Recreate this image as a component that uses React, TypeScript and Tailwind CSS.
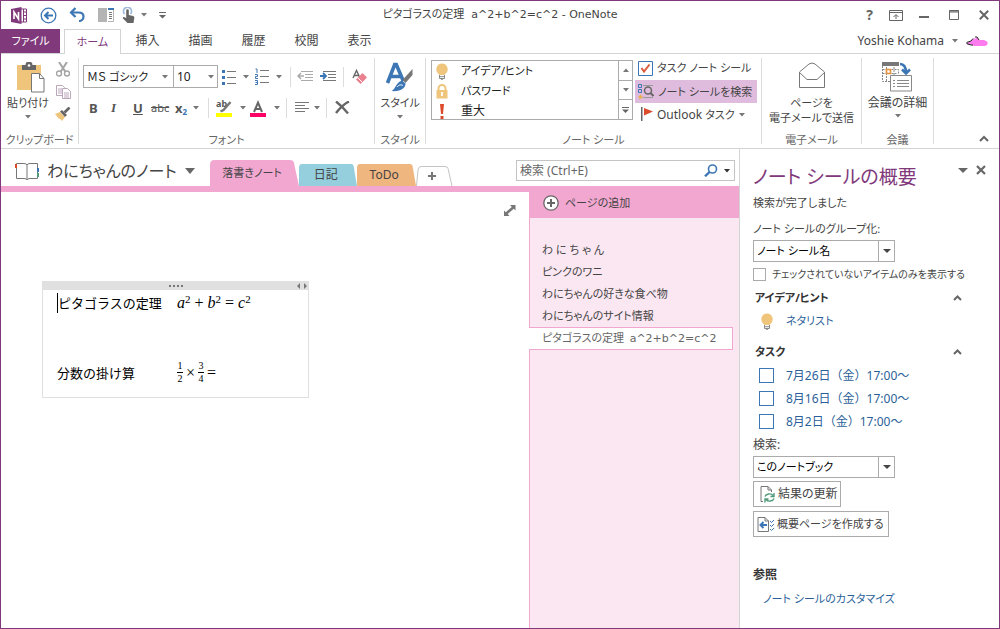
import type { ReactNode } from "react";

const menuTabs = ["挿入", "描画", "履歴", "校閲", "表示"];
const pages = ["わ に ち ゃ ん", "ピンクのワニ", "わにちゃんの好きな食べ物", "わにちゃんのサイト情報"];
const tasks = ["7月26日（金）17:00～", "8月16日（金）17:00～", "8月2日（金）17:00～"];

function Caret({ className = "text-[#777]" }: { className?: string }) {
    return (
        <svg width="6" height="4" viewBox="0 0 6 4" className={`shrink-0 ${className}`}>
            <path d="M0 0h6L3 3.5z" fill="currentColor" />
        </svg>
    );
}

function Sep() {
    return <span className="h-5 w-px shrink-0 bg-[#dcdcdc]" />;
}

function Bulb() {
    return (
        <svg width="14" height="17" viewBox="0 0 14 17" className="shrink-0">
            <path d="M7 0.5a5.8 5.8 0 0 0-3.4 10.4L4.5 12h5l.9-1.1A5.8 5.8 0 0 0 7 .5z" fill="#efc57c" />
            <path d="M4.5 12v3.5h5V12M4.5 13.7h5M6 16.3h2" stroke="#8a8a8a" fill="none" />
        </svg>
    );
}

function Group({ label, className, children }: { label: string; className: string; children: ReactNode }) {
    return (
        <section className={`mb-1 flex shrink-0 flex-col border-r border-[#dcdcdc] ${className}`}>
            <div className="min-h-0 flex-1">{children}</div>
            <div className="-mb-1 text-center text-[11px]/4 text-[#666]">{label}</div>
        </section>
    );
}

function TitleBar() {
    return (
        <header className="flex h-7 items-center pr-2.5 pl-2.5">
            <div className="flex flex-1 items-center">
                <svg width="17" height="17" viewBox="0 0 17 17">
                    <path d="M9 2h6.500v13H9" fill="#fff" stroke="#80397b" />
                    <path d="M12.5 2v13M13 5h3M13 8.5h3M13 12h3" stroke="#80397b" fill="none" />
                    <path d="M0 2l10.5-2v17L0 15z" fill="#80397b" />
                    <path d="M3 12V5l4.5 7V5" stroke="#fff" strokeWidth="1.6" fill="none" />
                </svg>
                <button aria-label="戻る" className="ml-3">
                    <svg width="17" height="17" viewBox="0 0 17 17" fill="none" stroke="#3c76b4">
                        <circle cx="8.5" cy="8.5" r="7.3" strokeWidth="1.3" />
                        <path d="M13 8.5H5M8.5 5L5 8.5 8.5 12" strokeWidth="2" />
                    </svg>
                </button>
                <button aria-label="元に戻す" className="ml-3">
                    <svg width="17" height="16" viewBox="0 0 17 16" fill="none" stroke="#3c76b4" strokeWidth="2.2">
                        <path d="M6.5 1L2 5.5 6.5 10" />
                        <path d="M2 5.5h7.5c3 0 5 1.5 5 4s-2 4.5-4.5 4.5" />
                    </svg>
                </button>
                <button aria-label="デスクトップに固定" className="ml-3">
                    <svg width="16" height="14" viewBox="0 0 16 14">
                        <path d="M0 0h9v14H0z" fill="#b4b4b4" />
                        <path d="M10 .5h5.5v13H10" fill="#fff" stroke="#b4b4b4" />
                        <path d="M10 0h6v2h-6z" fill="#3c76b4" />
                        <path d="M11 4.5h3M11 6.5h3M11 8.5h3M11 10.5h3" stroke="#777" />
                    </svg>
                </button>
                <button aria-label="タッチ" className="ml-2 flex items-center gap-1.5">
                    <svg width="13" height="17" viewBox="0 0 13 17">
                        <path d="M2.5 7A4 4 0 1 1 8.5 7" fill="none" stroke="#9ebbd9" strokeWidth="1.8" />
                        <path d="M4.2 3.5a1.3 1.3 0 0 1 2.6 0V8l4.2 1c1 .3 1.5 1 1.3 2L11.5 16h-6L1 11.5c-.6-1 .4-1.9 1.4-1.3L4.2 11z" fill="#666" />
                    </svg>
                    <Caret />
                </button>
                <button aria-label="クイック アクセス" className="ml-3">
                    <svg width="7" height="7" viewBox="0 0 7 7" fill="#666">
                        <path d="M0 0h7v1H0zM0 3h7L3.5 6.5z" />
                    </svg>
                </button>
            </div>
            <h1 className="font-['DejaVu_Sans','Noto_Sans_CJK_JP',sans-serif] text-[11px]/4 text-[#444]">ピタゴラスの定理&nbsp; a^2+b^2=c^2 - OneNote</h1>
            <div className="flex flex-1 items-center justify-end text-[#666]">
                <button aria-label="ヘルプ" className="text-[14px]/4 font-bold">?</button>
                <button aria-label="リボンの表示" className="ml-4">
                    <svg width="14" height="11" viewBox="0 0 14 11" fill="none" stroke="currentColor">
                        <path d="M.5.5h13v10H.5zM.5 2.5h13M7 9V5M4.5 7L7 4.5 9.5 7" />
                    </svg>
                </button>
                <button aria-label="最小化" className="ml-4">
                    <svg width="10" height="10"><path d="M0 6h10v2H0z" fill="currentColor" /></svg>
                </button>
                <button aria-label="最大化" className="ml-5">
                    <svg width="10" height="10" fill="none" stroke="currentColor"><path d="M.5.5h9v9h-9zM0 2h10M0 1h10" /></svg>
                </button>
                <button aria-label="閉じる" className="ml-5">
                    <svg width="10" height="10" stroke="currentColor" strokeWidth="2"><path d="M.8.8l8.4 8.4M9.2.8L.8 9.2" /></svg>
                </button>
            </div>
        </header>
    );
}

function TabRow() {
    return (
        <nav className="flex h-[25px] items-stretch border-b border-[#d4d4d4] text-[12px]/4 text-[#444]">
            <button className="w-[59px] bg-[#80397b] text-[11px]/4 text-white">ファイル</button>
            <button className="-mb-px ml-1 w-[57px] border border-b-0 border-[#d4d4d4] bg-white text-[11px]/4 text-[#80397b]">ホーム</button>
            {menuTabs.map((t) => (
                <button key={t} className="w-[53px]">{t}</button>
            ))}
            <button className="ml-auto flex items-center gap-2 pr-2.5 text-[12px]/4">
                Yoshie Kohama
                <Caret />
                <svg width="23" height="11" viewBox="0 0 23 11">
                    <path d="M1 7l5-2.500 2-2.500 1.500 1L11 1l2 3h5l3 1.500q1.500 1.500 0 3.500l-2 1H8L5 8.500H1z" fill="#fb7bee" />
                    <path d="M.5 6.500L5 5l2-2.500M9 1h2l2 3M.5 7.500L5 9h2" stroke="#222" fill="none" />
                </svg>
            </button>
        </nav>
    );
}

function FontGroup() {
    return (
        <Group label="フォント" className="w-[296px]">
            <div className="mt-[7px] flex h-[23px] items-center pl-1">
                <div className="relative">
                    <select aria-label="フォント名" className="block h-[23px] w-[91px] appearance-none border border-[#ababab] bg-white pl-[3px] text-[11px]/5 text-[#222]">
                        <option>ＭＳ ゴシック</option>
                    </select>
                    <Caret className="pointer-events-none absolute top-2.5 right-1.5 text-[#777]" />
                </div>
                <div className="relative">
                    <select aria-label="フォント サイズ" className="block h-[23px] w-11 appearance-none border border-l-0 border-[#ababab] bg-white pl-[3px] text-[12px]/5 text-[#222]">
                        <option>10</option>
                    </select>
                    <Caret className="pointer-events-none absolute top-2.5 right-1 text-[#777]" />
                </div>
                <button aria-label="箇条書き" className="ml-1 flex items-center gap-[7px]">
                    <svg width="14" height="16" viewBox="0 0 14 16">
                        <path d="M5 2.5h9M5 8.5h9M5 14.5h9" stroke="#777" />
                        <path d="M0 1h3v3H0zM0 7h3v3H0zM0 13h3v3H0z" fill="#3c76b4" />
                    </svg>
                    <Caret />
                </button>
                <button aria-label="段落番号" className="ml-1.5 flex items-center gap-[7px]">
                    <svg width="14" height="17" viewBox="0 0 14 17">
                        <path d="M5 2.5h9M5 8.5h9M5 14.5h9" stroke="#777" />
                        <path d="M.5 1H2v4M0 6.5h2.5v2H.5v2H3M0 12.5h2.5v4H0M.5 14.5h2" stroke="#3c76b4" fill="none" />
                    </svg>
                    <Caret />
                </button>
                <span className="ml-2 flex"><Sep /></span>
                <button aria-label="インデント解除" className="ml-1.5">
                    <svg width="17" height="11" viewBox="0 0 17 11" fill="none" stroke="#aaa">
                        <path d="M4 .5h12M8 3.5h8M8 6.5h8M4 9.5h12" />
                        <path d="M7 5H1M4 2L1 5l3 3" strokeWidth="1.5" />
                    </svg>
                </button>
                <button aria-label="インデント" className="ml-1.5">
                    <svg width="17" height="11" viewBox="0 0 17 11" fill="none" stroke="#777">
                        <path d="M3 .5h13M8 3.5h8M8 6.5h8M3 9.5h13" />
                        <path d="M0 5h6M3 2l3 3-3 3" stroke="#3c76b4" strokeWidth="1.8" />
                    </svg>
                </button>
                <span className="ml-1.5 flex"><Sep /></span>
                <button aria-label="書式のクリア" className="ml-2">
                    <svg width="16" height="16" viewBox="0 0 16 16">
                        <path d="M1 9L4.500 1.500 8 9M2.200 6.500h4.600" stroke="#666" strokeWidth="1.4" fill="none" />
                        <path d="M10.5 4L15 8.5 8.500 15 4 10.500z" fill="#e9818e" />
                        <path d="M5.5 8.500l5 5" stroke="#fff" />
                    </svg>
                </button>
            </div>
            <div className="mt-2 flex h-[23px] items-center pl-2.5 text-[13px]/5 text-[#555]">
                <button aria-label="太字" className="w-[22px] text-left font-bold">B</button>
                <button aria-label="斜体" className="w-[22px] text-left font-['Liberation_Serif'] font-bold italic">I</button>
                <button aria-label="下線" className="w-[18px] text-left font-bold underline">U</button>
                <button aria-label="取り消し線" className="w-6 text-left text-[11px]/5 line-through">abc</button>
                <button aria-label="下付き" className="flex w-[33px] items-center gap-1.5 font-bold">
                    <span>x<sub className="text-[8px]/3 text-[#3c76b4]">2</sub></span>
                    <Caret />
                </button>
                <Sep />
                <button aria-label="蛍光ペン" className="ml-[7px] flex items-center gap-2">
                    <span className="relative h-[18px] w-4">
                        <span className="block text-left text-[9px]/[10px] font-bold">ab</span>
                        <svg width="16" height="18" viewBox="0 0 16 18" className="absolute inset-0">
                            <path d="M14.500 3L7.500 11l-3 1.500" stroke="#777" strokeWidth="2.4" fill="none" />
                            <path d="M0 14h16v4H0z" fill="#ffff00" />
                        </svg>
                    </span>
                    <Caret />
                </button>
                <button aria-label="フォントの色" className="ml-1 flex items-center gap-2">
                    <svg width="16" height="18" viewBox="0 0 16 18">
                        <path d="M4 13L8 3.5 12 13M5.3 10h5.5" stroke="#666" strokeWidth="2" fill="none" />
                        <path d="M0 14h16v4H0z" fill="#ff0066" />
                    </svg>
                    <Caret />
                </button>
                <span className="ml-1.5 flex"><Sep /></span>
                <button aria-label="配置" className="ml-2 flex items-center gap-1">
                    <svg width="15" height="11" stroke="#777"><path d="M0 .5h14M0 3.5h10M0 6.5h14M0 9.5h10" /></svg>
                    <Caret />
                </button>
                <span className="ml-1.5 flex"><Sep /></span>
                <button aria-label="削除" className="ml-2">
                    <svg width="15" height="13" stroke="#666" strokeWidth="2.4" fill="none"><path d="M1 .5c4 3 8 7 12 12M14 .5C9 3 5 7 1 12" /></svg>
                </button>
            </div>
        </Group>
    );
}

function TagGroup() {
    return (
        <Group label="ノート シール" className="w-[336px]">
            <div className="flex pt-0.5 pl-[5px]">
                <div className="flex h-[60px] w-[202px] border border-[#ababab]">
                    <ul className="flex flex-1 flex-col text-[11px]/5 text-[#222]">
                        <li><button className="flex h-5 items-center gap-3 pl-[3px]"><Bulb />アイデア/ヒント</button></li>
                        <li>
                            <button className="flex h-5 items-center gap-3 pl-[3px]">
                                <svg width="14" height="15" viewBox="0 0 14 15">
                                    <path d="M3.5 7V4.5a3.5 3.5 0 0 1 7 0V7" stroke="#efc57c" strokeWidth="2" fill="none" />
                                    <path d="M1.5 6h11v8.5h-11z" fill="#efc57c" />
                                    <path d="M7 8v4" stroke="#fff" strokeWidth="1.8" />
                                </svg>
                                パスワード
                            </button>
                        </li>
                        <li>
                            <button className="flex h-5 items-center gap-3 pl-[3px] text-[12px]/5">
                                <svg width="14" height="15" viewBox="0 0 14 15" fill="#dc4a2c"><path d="M5 0h4L8 10H6zM5.5 12h3v3h-3z" /></svg>
                                重大
                            </button>
                        </li>
                    </ul>
                    <div className="flex w-3.5 flex-col divide-y divide-[#ababab] border-l border-[#ababab]">
                        <button aria-label="上へ" className="flex flex-1 items-center justify-center"><Caret className="rotate-180 text-[#777]" /></button>
                        <button aria-label="下へ" className="flex flex-1 items-center justify-center"><Caret /></button>
                        <button aria-label="その他" className="flex flex-1 items-center justify-center">
                            <svg width="7" height="6" viewBox="0 0 7 6" fill="#666"><path d="M0 0h7v1H0zM0 2.5h7L3.5 6z" /></svg>
                        </button>
                    </div>
                </div>
                <div className="ml-0.5 flex w-[122px] flex-col text-[12px]/5 text-[#444]">
                    <button className="flex h-5 items-center gap-1 pb-1 pl-[3px] text-[11px]/4">
                        <svg width="15" height="15" viewBox="0 0 15 15" fill="none">
                            <path d="M.5.5h14v14H.5z" stroke="#3c76b4" />
                            <path d="M3.5 7L6 10.5 11.5 3.5" stroke="#dc5a3c" strokeWidth="2" />
                        </svg>
                        タスク ノート シール
                    </button>
                    <button className="flex h-[23px] items-center gap-1 bg-[#dfbcdd] pl-[3px] text-[11px]/5">
                        <svg width="16" height="16" viewBox="0 0 16 16" fill="none">
                            <path d="M.5.5h3v3h-3zM.5 5.5h3v3h-3z" stroke="#3c76b4" />
                            <path d="M5 1.5h10M5 13.5h10" stroke="#999" />
                            <circle cx="10" cy="6.5" r="3.5" stroke="#666" strokeWidth="1.5" />
                            <path d="M12.5 9l3 3" stroke="#666" strokeWidth="2" />
                            <path d="M2.5 10l.8 1.8 1.9.2-1.4 1.3.4 1.9-1.7-1-1.7 1 .4-1.9L0 12l1.9-.2z" fill="#e8b04c" />
                        </svg>
                        ノート シールを検索
                    </button>
                    <button className="flex h-[23px] items-center gap-1 pl-[6px]">
                        <svg width="12" height="15" viewBox="0 0 12 15"><path d="M0 0h1.5v14H0z" fill="#666" /><path d="M3 1l9 3.5L3 8.5z" fill="#dc4a2c" /></svg>
                        <span>Outlook <span className="text-[11px]/5">タスク</span></span>
                        <Caret />
                    </button>
                </div>
            </div>
        </Group>
    );
}

function Ribbon() {
    return (
        <div className="flex h-[95px] border-b border-[#d4d4d4] pt-1 text-[#444]">
            <Group label="クリップボード" className="w-[78px]">
                <div className="flex pt-1">
                    <button className="flex w-[54px] flex-col items-center text-[11px]/4">
                        <svg width="29" height="31" viewBox="0 0 29 31" className="mb-0.5 ml-1">
                            <path d="M1 3h24v25H1z" fill="#efc57c" />
                            <path d="M6 3h3.5a3.5 3.5 0 0 1 7 0H20v5H6z" fill="#666" />
                            <circle cx="13" cy="3.5" r="1.3" fill="#fff" />
                            <path d="M15.5 11.5h8l4.5 5v13.5H15.5z" fill="#fff" stroke="#777" />
                            <path d="M23.5 11.5v5H28" fill="none" stroke="#777" />
                        </svg>
                        貼り付け
                        <span className="mt-1"><Caret /></span>
                    </button>
                    <div className="flex flex-col items-center gap-2">
                        <button aria-label="切り取り">
                            <svg width="14" height="15" viewBox="0 0 14 15" fill="none" stroke="#a5a5a5" strokeWidth="1.4">
                                <path d="M3 0l6.5 10M11 0L4.5 10" strokeWidth="2" />
                                <circle cx="3" cy="11.5" r="2.5" /><circle cx="11" cy="11.5" r="2.5" />
                            </svg>
                        </button>
                        <button aria-label="コピー">
                            <svg width="15" height="14" viewBox="0 0 15 14" fill="#fff" stroke="#b9a7b9">
                                <path d="M.5.5h6l2 2v8h-8zM2 4h4M2 6h4M2 8h4" />
                                <path d="M6.5 3.5h5l3 3v7h-8zM8 8h5M8 10h5M8 12h5" />
                            </svg>
                        </button>
                        <button aria-label="書式のコピー">
                            <svg width="16" height="14" viewBox="0 0 16 14">
                                <path d="M0 7l5-2 5 5-3 4c-1-1.5-1.5-2-2.5-2.5L4 12 2 9.5z" fill="#efc57c" />
                                <path d="M5 4.5L7 3l5 5-2 2z" fill="#666" />
                                <path d="M9.5 5.5L14.500.500" stroke="#666" strokeWidth="2.6" />
                            </svg>
                        </button>
                    </div>
                </div>
            </Group>
            <FontGroup />
            <Group label="スタイル" className="w-[51px]">
                <button className="flex w-full flex-col items-center pt-1 text-[11px]/4">
                    <svg width="30" height="31" viewBox="0 0 30 31" className="mb-0.5">
                        <path d="M2.5 21L9.700 2.500h1.600l7 16.500M5.500 14.500h11" stroke="#3c76b4" strokeWidth="3.6" fill="none" />
                        <path d="M27.5 7v6l-7 8-3-3z" fill="#777" />
                        <path d="M17 18.5l3.5 3c.5 4-5 8.5-14 7.500 4.500-2 4-8.500 10.500-10.500z" fill="#3c76b4" />
                        <path d="M12 25c2-2.5 4-2.5 6-1.500" stroke="#fff" fill="none" />
                    </svg>
                    スタイル
                    <span className="mt-1"><Caret /></span>
                </button>
            </Group>
            <TagGroup />
            <Group label="電子メール" className="w-[100px]">
                <button className="flex w-full flex-col items-center pt-1 text-[11px]/[15px]">
                    <svg width="28" height="27" viewBox="0 0 28 27" fill="none" stroke="#777" className="mb-1.5">
                        <path d="M1.5 10L11 2q3-2 6 0l9.5 8v15.500h-25z" />
                        <path d="M1.5 10.500L9 17.500h10l7.500-7" />
                    </svg>
                    ページを
                    <span className="whitespace-nowrap">電子メールで送信</span>
                </button>
            </Group>
            <Group label="会議" className="w-[72px]">
                <button className="flex w-full flex-col items-center pt-1 text-[12px]/[15px]">
                    <svg width="31" height="30" viewBox="0 0 31 30" fill="none" stroke="#888" className="mb-[3px]">
                        <path d="M0 0h17v4H0z" fill="#777" stroke="none" />
                        <path d="M.5 4v15.5H8M.5 7.5h16v5M.5 11.5h15M4.5 5v14M12 5v8" strokeDasharray="2 1" />
                        <path d="M4.5 7.5h4v4h-4z" stroke="#e8913c" strokeWidth="1.6" />
                        <path d="M8.5 13.5h21v15.500h-21zM11 18.5h2M15 18.5h12M11 21.5h2M15 21.5h12M11 24.5h2M15 24.5h12" fill="#fff" />
                        <path d="M18 2c4 0 6 2.5 6 9M20 7.5l4 4 4-4" stroke="#3c76b4" strokeWidth="2.6" />
                    </svg>
                    会議の詳細
                    <span className="mt-1"><Caret /></span>
                </button>
            </Group>
            <button aria-label="リボンを折りたたむ" className="mt-auto mr-2.5 mb-1.5 ml-auto">
                <svg width="10" height="7" fill="none" stroke="#666" strokeWidth="2"><path d="M1 6l4-4 4 4" /></svg>
            </button>
        </div>
    );
}

function SectionTab({ label, fill, className }: { label: string; fill: string; className: string }) {
    return (
        <button className={`relative pr-1 ${className}`}>
            <svg viewBox="0 0 60 22" preserveAspectRatio="none" className="absolute inset-0 h-full w-full">
                <path d="M0 22V4q0-4 3-4h51q2 0 2.500 2L60 22z" fill={fill} />
            </svg>
            <span className="relative">{label}</span>
        </button>
    );
}

function NotebookBar() {
    return (
        <div className="flex h-[37px] items-end">
            <button className="flex h-[30px] items-center gap-2 pl-3.5 text-[16px]/6 text-[#444]">
                <svg width="24" height="19" viewBox="0 0 24 19" fill="none" stroke="#777">
                    <path d="M1.5 1.5H9q2.5 0 3 1.500.5-1.500 3-1.500h7.500v15H15q-2.500 0-3 1.500-.5-1.500-3-1.500H1.500zM12 3v14" />
                    <path d="M1 2v4" stroke="#dc4a2c" strokeWidth="2" />
                    <path d="M23 6v4" stroke="#3c76b4" strokeWidth="2" />
                    <path d="M23 11v4" stroke="#4f9a78" strokeWidth="2" />
                </svg>
                <span>わにちゃんのノート</span>
                <svg width="10" height="6" fill="#666"><path d="M0 0h10L5 6z" /></svg>
            </button>
            <div className="ml-[15px] flex items-end text-[12px]/4 text-[#444]">
                <SectionTab label="落書きノート" fill="#f2a7d0" className="h-[26px] w-[89px] text-[11px]/4" />
                <SectionTab label="日記" fill="#95cfde" className="h-[22px] w-[58px]" />
                <SectionTab label="ToDo" fill="#f0b680" className="h-[22px] w-[59px]" />
                <button aria-label="新しいセクション" className="flex">
                    <svg width="37" height="20" viewBox="0 0 37 20" fill="none">
                        <path d="M.5 20L2 4q.5-3.5 3-3.5h24q2.500 0 3 2L36 20" stroke="#c4c4c4" />
                        <path d="M12 10h8M16 6v8" stroke="#777" strokeWidth="2" />
                    </svg>
                </button>
            </div>
            <form className="mr-1 mb-[5px] ml-auto flex h-[21px] w-[219px] items-center border border-[#c4c4c4] pr-1">
                <input aria-label="検索" placeholder="検索 (Ctrl+E)" className="min-w-0 flex-1 pl-[3px] text-[12px]/4 outline-none placeholder:text-[#666]" />
                <button aria-label="検索する" type="button" className="flex items-center gap-1.5">
                    <svg width="14" height="13" viewBox="0 0 14 13" fill="none" stroke="#3c76b4">
                        <circle cx="8.5" cy="5" r="4" strokeWidth="1.6" /><path d="M5.5 8L1 12.300" strokeWidth="2.4" />
                    </svg>
                    <Caret className="text-[#333]" />
                </button>
            </form>
        </div>
    );
}

function Fraction({ top, bottom }: { top: string; bottom: string }) {
    return (
        <span className="flex w-1.5 flex-col text-center text-[10px]/3">
            <span className="border-b border-black">{top}</span>
            <span>{bottom}</span>
        </span>
    );
}

function Canvas() {
    return (
        <main className="relative min-w-0 flex-1 bg-white">
            <button aria-label="全画面表示" className="absolute top-[13px] right-[13px]">
                <svg width="12" height="11" viewBox="0 0 12 11" fill="#777">
                    <path d="M6 0h5.500v5.500L9.700 3.700 3.700 9 5.500 11H0V5.500l1.800 1.800L7.800 2z" />
                </svg>
            </button>
            {/* free-floating note container */}
            <article className="absolute top-[89px] left-[41px] w-[267px] border border-[#e0e0e0] font-['Noto_Sans_CJK_JP',sans-serif] text-[13px]/5 text-black">
                <div className="flex h-2 items-center justify-end bg-[#e0e0e0] pr-px">
                    <span className="mx-auto flex gap-[2px] pl-3">
                        {[0, 1, 2, 3].map((i) => (
                            <i key={i} className="h-0.5 w-0.5 bg-[#777]" />
                        ))}
                    </span>
                    <svg width="10" height="6" fill="#777"><path d="M3 0v6L0 3zM7 0v6l3-3z" /></svg>
                </div>
                <div className="flex h-[107px] flex-col justify-between pt-[3px] pb-3 pl-3.5 [font-feature-settings:normal]">
                    <p className="flex">
                        <span className="w-[120px] border-l border-black">ピタゴラスの定理</span>
                        <span className="font-['Liberation_Serif',serif] text-[16px]/5">
                            <i>a</i><sup className="text-[11px]/3">2</sup> + <i>b</i><sup className="text-[11px]/3">2</sup> = <i>c</i><sup className="text-[11px]/3">2</sup>
                        </span>
                    </p>
                    <p className="flex items-center">
                        <span className="w-[120px]">分数の掛け算</span>
                        <span className="flex items-center gap-[3px] font-['Liberation_Serif',serif] text-[16px]/5">
                            <Fraction top="1" bottom="2" />
                            ×
                            <Fraction top="3" bottom="4" />
                            =
                        </span>
                    </p>
                </div>
            </article>
        </main>
    );
}

function PageList() {
    return (
        <aside className="flex w-[210px] shrink-0 flex-col text-[11px]/[22px] text-[#444]">
            <button className="flex h-[26px] items-center gap-1.5 bg-[#f2a7d0] pb-1 pl-3.5">
                <svg width="16" height="16" fill="none" stroke="#666">
                    <circle cx="8" cy="8" r="7.2" fill="#fff" strokeWidth="1.3" /><path d="M4 8h8M8 4v8" strokeWidth="2" />
                </svg>
                <span className="text-[11px]/4">ページの追加</span>
            </button>
            <ul className="flex flex-1 flex-col bg-[#fbe7f2]">
                <li className="h-[21px] border-l border-[#f2a7d0]" />
                {pages.map((p) => (
                    <li key={p} className="h-[22px] border-l border-[#f2a7d0] pl-3"><a href="#">{p}</a></li>
                ))}
                <li className="mr-1.5 flex h-[23px] items-center border border-l-0 border-[#f2a7d0] bg-white pl-[13px] whitespace-nowrap text-[#666]">
                    <a href="#" className="text-[11px]/4">ピタゴラスの定理&nbsp; <span className="font-['DejaVu_Sans']">a^2+b^2=c^2</span></a>
                </li>
                <li className="flex-1 border-l border-[#f2a7d0]" />
            </ul>
        </aside>
    );
}

function PanelSelect({ id, value }: { id: string; value: string }) {
    return (
        <div className="relative w-[142px]">
            <select id={id} className="block h-[22px] w-full appearance-none border border-[#ababab] bg-white pl-[3px] text-[11px]/5 text-black">
                <option>{value}</option>
            </select>
            <span className="pointer-events-none absolute inset-y-0 right-0 flex w-[17px] items-center justify-center border-l border-[#ababab]">
                <svg width="8" height="4" fill="#444"><path d="M0 0h8L4 4z" /></svg>
            </span>
        </div>
    );
}

function PanelHeading({ children }: { children: ReactNode }) {
    return (
        <h3 className="flex h-[22px] items-center justify-between pr-[37px] pl-0.5 text-[11px]/4 font-bold text-[#333]">
            {children}
            <svg width="9" height="6" fill="none" stroke="#666" strokeWidth="2"><path d="M1 5l3.5-3.5L8 5" /></svg>
        </h3>
    );
}

function SummaryPanel() {
    return (
        <aside className="flex w-[260px] shrink-0 flex-col border-l border-[#d4d4d4] pt-3 pl-[13px] text-[12px]/4 text-[#444]">
            <div className="flex items-start justify-between pr-[13px]">
                <h2 className="text-[19px]/8 text-[#80397b]">ノート シールの概要</h2>
                <div className="flex items-center gap-2 pt-1">
                    <svg width="10" height="5" fill="#666"><path d="M0 0h10L5 5z" /></svg>
                    <button aria-label="ウィンドウを閉じる">
                        <svg width="10" height="10" stroke="#666" strokeWidth="2.2"><path d="M1 1l8 8M9 1L1 9" /></svg>
                    </button>
                </div>
            </div>
            <p className="mt-[2px] text-[11px]/4">検索が完了しました</p>
            <label htmlFor="grouping" className="mt-2.5 mb-[3px] text-[11px]/4">ノート シールのグループ化:</label>
            <PanelSelect id="grouping" value="ノート シール名" />
            <label className="mt-1 flex h-4 items-center gap-1.5 text-[10px]/4 whitespace-nowrap">
                <input type="checkbox" className="size-[13px] appearance-none border border-[#ababab] bg-white" />
                チェックされていないアイテムのみを表示する
            </label>
            <div className="mt-[5px]"><PanelHeading>アイデア/ヒント</PanelHeading></div>
            <a href="#" className="flex h-6 items-center gap-3 pl-[7px] text-[11px]/4 text-[#2b5f99]"><Bulb />ネタリスト</a>
            <div className="mt-2"><PanelHeading>タスク</PanelHeading></div>
            <div className="mt-px [font-feature-settings:normal]">
                {tasks.map((t) => (
                    <label key={t} className="flex h-[23px] items-center gap-3 pl-1.5 whitespace-nowrap text-[#2b5f99]">
                        <input type="checkbox" className="size-[15px] appearance-none border border-[#3c76b4] bg-white" />
                        {t}
                    </label>
                ))}
            </div>
            <label htmlFor="scope" className="mt-1 mb-[3px]">検索:</label>
            <PanelSelect id="scope" value="このノートブック" />
            <button className="mt-[3px] flex h-[26px] w-[88px] items-center gap-0.5 border border-[#ababab] pl-1.5 whitespace-nowrap">
                <svg width="16" height="17" viewBox="0 0 16 17" fill="none" className="shrink-0">
                    <path d="M3 15.5H1V.5h7L11.500 4v2M8 .5V4h3.500" stroke="#777" />
                    <path d="M5 10.5c1-3 6-3.5 8-1M14 7v3.5h-3.5M14 12.5c-1 3-6 3.5-8 1M5 16.5v-3.500h3.500" stroke="#4f9a78" strokeWidth="1.4" />
                </svg>
                結果の更新
            </button>
            <button className="mt-1 flex h-[26px] w-[136px] items-center gap-0.5 border border-[#ababab] pl-[3px] text-[11px]/4 whitespace-nowrap">
                <svg width="18" height="15" viewBox="0 0 18 15" fill="none" className="shrink-0">
                    <path d="M1 .5h7l3.5 3.5v10.500H1zM8 .5V4h3.500" stroke="#777" />
                    <path d="M10 8H4M6.500 5L3.500 8l3 3" stroke="#3c76b4" strokeWidth="2" />
                    <path d="M13 4l1.500 1.500L17 3M13 8l1.500 1.500L17 7M13 12l1.500 1.500L17 11" stroke="#3c76b4" />
                </svg>
                概要ページを作成する
            </button>
            <h3 className="mt-[30px] font-bold text-[#333]">参照</h3>
            <a href="#" className="mt-2 pl-2.5 text-[11px]/4 text-[#2b5f99]">ノート シールのカスタマイズ</a>
        </aside>
    );
}

export default function App() {
    return (
        <div className="flex min-h-screen flex-col overflow-hidden border border-[#80397b] bg-white font-['Noto_Sans','Noto_Sans_CJK_JP',sans-serif] [font-feature-settings:'palt']">
            <TitleBar />
            <TabRow />
            <Ribbon />
            <div className="flex flex-1">
                <div className="flex min-w-0 flex-1 flex-col">
                    <NotebookBar />
                    <div className="h-1.5 bg-[#f2a7d0]" />
                    <div className="flex flex-1">
                        <Canvas />
                        <PageList />
                    </div>
                </div>
                <SummaryPanel />
            </div>
        </div>
    );
}
